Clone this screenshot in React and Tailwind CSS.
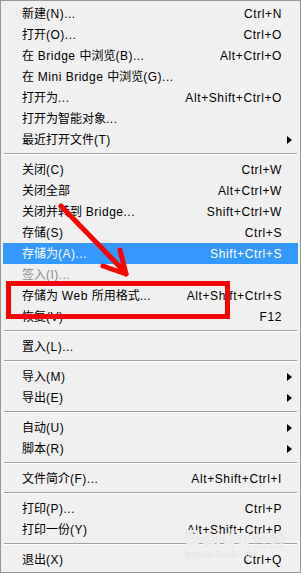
const groups = [
  [
    { label: "新建(N)...", key: "Ctrl+N" },
    { label: "打开(O)...", key: "Ctrl+O" },
    { label: "在 Bridge 中浏览(B)...", key: "Alt+Ctrl+O" },
    { label: "在 Mini Bridge 中浏览(G)..." },
    { label: "打开为...", key: "Alt+Shift+Ctrl+O" },
    { label: "打开为智能对象..." },
    { label: "最近打开文件(T)", sub: true },
  ],
  [
    { label: "关闭(C)", key: "Ctrl+W" },
    { label: "关闭全部", key: "Alt+Ctrl+W" },
    { label: "关闭并转到 Bridge...", key: "Shift+Ctrl+W" },
    { label: "存储(S)", key: "Ctrl+S" },
    { label: "存储为(A)...", key: "Shift+Ctrl+S", active: true },
    { label: "签入(I)...", disabled: true },
    { label: "存储为 Web 所用格式...", key: "Alt+Shift+Ctrl+S" },
    { label: "恢复(V)", key: "F12" },
  ],
  [{ label: "置入(L)..." }],
  [
    { label: "导入(M)", sub: true },
    { label: "导出(E)", sub: true },
  ],
  [
    { label: "自动(U)", sub: true },
    { label: "脚本(R)", sub: true },
  ],
  [{ label: "文件简介(F)...", key: "Alt+Shift+Ctrl+I" }],
  [
    { label: "打印(P)...", key: "Ctrl+P" },
    { label: "打印一份(Y)", key: "Alt+Shift+Ctrl+P" },
  ],
  [{ label: "退出(X)", key: "Ctrl+Q" }],
];

// latin runs get a bit of spacing so they read like the Tahoma menu font
function Label({ text }) {
  const parts = text.split(/([\u4e00-\u9fff]+)/);
  return (
    <span className="flex-1 whitespace-nowrap">
      {parts.map((p, i) =>
        i % 2 === 1 ? (
          <span key={i}>{p}</span>
        ) : (
          <span key={i} className="tracking-[0.5px]">
            {p}
          </span>
        )
      )}
    </span>
  );
}

function Row({ item }) {
  const color = item.active
    ? "bg-[#3399ff] text-white"
    : item.disabled
    ? "text-[#8c8c8c]"
    : "text-black";
  return (
    <div className={`flex items-center h-[21px] pl-[19px] ${color}`}>
      <Label text={item.label} />
      {item.key && <span className="whitespace-nowrap tracking-[0.6px]">{item.key}</span>}
      <span className="w-[16px] flex items-center pl-[5px]">
        {item.sub && (
          <span className="w-0 h-0 border-y-[4px] border-y-transparent border-l-[5px] border-l-black" />
        )}
      </span>
    </div>
  );
}

export default function App() {
  return (
    <div className="relative w-[301px] h-[573px] bg-[#f0f0f0] border border-[#979797] px-[2px] pt-[2px] font-['Liberation_Sans','Noto_Sans_CJK_SC',sans-serif] text-[12px] overflow-hidden">
      {groups.map((g, gi) => (
        <div key={gi}>
          {gi > 0 && (
            <div className="h-[9px] pt-[3px] px-[1px]">
              <div className="h-px bg-[#a0a0a0]" />
              <div className="h-px bg-white" />
            </div>
          )}
          {g.map((item, i) => (
            <Row key={i} item={item} />
          ))}
        </div>
      ))}

      {/* annotation: red box */}
      <div className="absolute left-[5px] top-[280px] w-[224px] h-[38px] border-[5px] border-[#ff0000]" />

      {/* annotation: red arrow */}
      <svg className="absolute left-0 top-0" width="301" height="573" viewBox="0 0 301 573">
        <g stroke="#ff0000" strokeWidth="5" strokeLinecap="round" fill="none">
          <line x1="60" y1="205" x2="123" y2="270" />
          <line x1="125" y1="273" x2="119" y2="249" />
          <line x1="125" y1="273" x2="102" y2="265" />
        </g>
      </svg>

      {/* watermark */}
      <div className="absolute left-[184px] top-[526px] text-white/70 leading-none pointer-events-none">
        <div className="flex items-end gap-[2px]">
          <span className="text-[22px] font-bold tracking-[1px] [text-shadow:0_0_1px_#c8c8c8]">Baidu</span>
          <span className="text-[16px] [text-shadow:0_0_1px_#c8c8c8]">经验</span>
        </div>
        <div className="text-[9px] mt-[1px] [text-shadow:0_0_1px_#c8c8c8]">jingyan.baidu.com</div>
      </div>
    </div>
  );
}
